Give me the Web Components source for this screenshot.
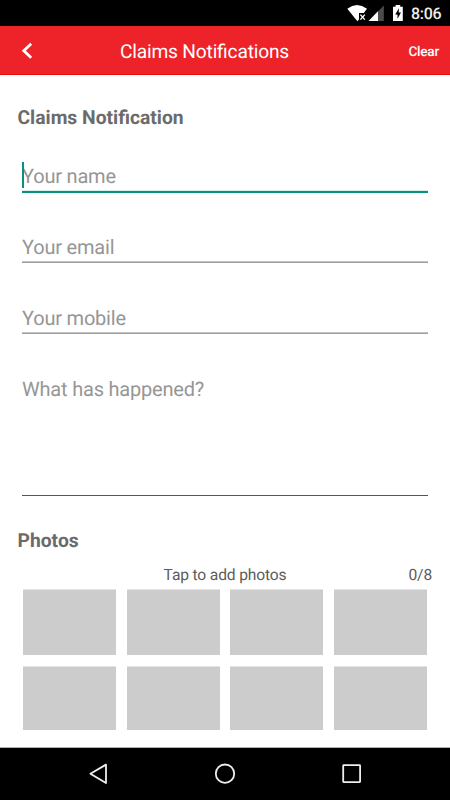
<!DOCTYPE html>
<html lang="en">
<head>
<meta charset="utf-8">
<title>Claims Notifications</title>
<style>
html,body{margin:0;height:100%;background:#fff;overflow:hidden}
body{font-family:Roboto,"Liberation Sans",sans-serif;text-rendering:geometricPrecision;font-feature-settings:"liga" 1}
</style>
</head>
<body>
<claims-screen></claims-screen>
<script>
function define(name, html) {
  const template = document.createElement('template');
  template.innerHTML = html;
  customElements.define(name, class extends HTMLElement {
    constructor() {
      super();
      this.attachShadow({ mode: 'open' }).append(template.content.cloneNode(true));
    }
  });
}

define('status-bar', `
<style>
:host{display:flex;height:26px;box-sizing:border-box;background:#000;color:#fff;align-items:center;justify-content:flex-end;padding-right:9px}
svg{display:block;width:60px;height:26px;margin-right:5px}
span{font-size:16px;letter-spacing:-.3px;line-height:26px;font-weight:500;color:#eee;width:30px;white-space:nowrap;padding-top:1px;box-sizing:border-box;height:26px}
</style>
<svg viewBox="346 0 60 26">
<path d="M347.3 8.7Q357 1.4 367 8.7L363.8 13H359V19.4L357.4 21.2Z" fill="#fff"/>
<path d="M360.4 14.6l4.4 5M364.8 14.6l-4.4 5" stroke="#fff" stroke-width="1.4" fill="none"/>
<path d="M383.8 5.5V21H368.6Z" fill="#4c4c4c"/>
<path d="M378 11.3V21H368.6Z" fill="#fff"/>
<path d="M393 6.7H395.6V5H400.2V6.7H402.8V21H393Z" fill="#fff"/>
<path d="M399 8.3L395.2 14.5H397.5V18.8L401 12.4H398.7Z" fill="#000"/>
</svg>
<span>8:06</span>`);

define('app-bar', `
<style>
:host{display:grid;grid-template-columns:120px 1fr auto;height:49px;box-sizing:border-box;background:#ee2229;border-bottom:1px solid #e80c0c;color:#fff;align-items:center}
svg{display:block;width:14px;height:20px;margin-left:20px;margin-top:2px}
.title{font-size:19.2px;letter-spacing:-.2px;line-height:24px;padding-top:3px;white-space:nowrap}
.action{justify-self:end;margin-right:11px;font-size:13.6px;letter-spacing:-.25px;line-height:20px;font-weight:500;padding-top:3px}
</style>
<svg viewBox="20 41 14 20"><path d="M31.2 43.8L23.8 50.8L31.2 57.8" fill="none" stroke="#fff" stroke-width="2.8"/></svg>
<div class="title"><slot></slot></div>
<div class="action"><slot name="action"></slot></div>`);

define('section-title', `
<style>
:host{display:block;font-size:19.3px;line-height:24px;height:24px;font-weight:700;color:#6b6b6b;white-space:nowrap}
</style><slot></slot>`);

define('text-field', `
<style>
:host{display:flex;box-sizing:border-box;height:71px;align-items:flex-start;font-size:20px;letter-spacing:-.2px;line-height:26px;color:#969696;position:relative;margin:0 22px;
background:linear-gradient(#c4c4c4,#c4c4c4) 0 29px/100% 1px no-repeat,linear-gradient(#9e9e9e,#9e9e9e) 0 30px/100% 1px no-repeat}
:host([focused]){background:linear-gradient(#d4eeea,#d4eeea) 0 29px/100% 1px no-repeat,linear-gradient(#099180,#099180) 0 30px/100% 2px no-repeat}
:host([multiline]){height:122px;background:linear-gradient(#555,#555) 0 121px/100% 1px no-repeat}
:host([focused])::before{content:"";position:absolute;left:0;top:1px;width:2px;height:26px;background:#099180}
span{white-space:nowrap;padding-top:2px}
</style><span><slot></slot></span>`);

define('photo-tile', `<style>:host{display:block;background:#ccc;box-shadow:0 -1px #e4e4e4}</style>`);

define('photo-picker', `
<style>
:host{display:block}
.caption{display:grid;grid-template-columns:1fr auto 1fr;font-size:15.6px;letter-spacing:-.15px;line-height:20px;color:#5c5c5c;height:25px;padding-right:18px;padding-left:18px}
.count{justify-self:end}
.grid{display:grid;grid-template-columns:repeat(4,93px);grid-template-rows:65px 63px;column-gap:10.7px;row-gap:12px;margin-left:23px}
</style>
<div class="caption"><i></i><span><slot></slot></span><span class="count"><slot name="count"></slot></span></div>
<div class="grid"><photo-tile></photo-tile><photo-tile></photo-tile><photo-tile></photo-tile><photo-tile></photo-tile><photo-tile></photo-tile><photo-tile></photo-tile><photo-tile></photo-tile><photo-tile></photo-tile></div>`);

define('navigation-bar', `
<style>
:host{display:flex;height:53px;box-sizing:border-box;background:#000;border-top:1px solid #b0b0b0;justify-content:center}
svg{display:block;width:450px;height:52px}
</style>
<svg viewBox="0 748 450 52" fill="none" stroke="#eee" stroke-width="1.8">
<path d="M106 764.6V783L90.4 773.8Z" stroke-linejoin="round"/>
<circle cx="225" cy="773.7" r="9.2"/>
<rect x="343.2" y="765.2" width="16.9" height="16.9" rx=".5"/>
</svg>`);

define('claims-screen', `
<style>
:host{display:flex;flex-direction:column;width:450px;height:800px}
main{flex:1;background:#fff;display:flex;flex-direction:column}
section-title{margin-left:17.5px}
.first{margin-top:31px;margin-bottom:31px}
.second{margin-top:33px;margin-bottom:12px}
</style>
<status-bar></status-bar>
<app-bar>Claims Notifications<span slot="action">Clear</span></app-bar>
<main>
<section-title class="first">Claims Notification</section-title>
<text-field focused>Your name</text-field>
<text-field>Your email</text-field>
<text-field>Your mobile</text-field>
<text-field multiline>What has happened?</text-field>
<section-title class="second">Photos</section-title>
<photo-picker>Tap to add photos<span slot="count">0/8</span></photo-picker>
</main>
<navigation-bar></navigation-bar>`);
</script>
</body>
</html>
